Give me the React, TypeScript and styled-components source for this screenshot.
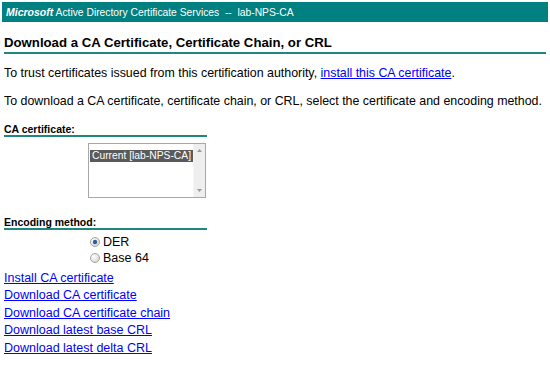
import React from "react";
import styled, { createGlobalStyle } from "styled-components";

const GlobalStyle = createGlobalStyle`
  body {
    margin: 0;
    background: #ffffff;
    font-family: "Liberation Sans", Arial, sans-serif;
    color: #000000;
  }
`;

const Page = styled.div`
  width: 550px;
  height: 371px;
  overflow: hidden;
  padding: 2px 2px 0 2px;
  box-sizing: border-box;
`;

const Banner = styled.div`
  height: 20px;
  background: #008080;
  color: #ffffff;
  font-size: 10.3px;
  line-height: 20px;
  padding-left: 4px;
  white-space: nowrap;
`;

const Brand = styled.span`
  font-weight: bold;
  font-style: italic;
  font-size: 10.5px;
`;

const Content = styled.div`
  padding: 0 2px;
`;

const Title = styled.div`
  margin-top: 13px;
  padding-bottom: 2px;
  border-bottom: 2px solid #1f8680;
  font-size: 13.2px;
  font-weight: bold;
  line-height: 15px;
`;

const Para = styled.p<{ $top: number }>`
  margin: ${(p) => p.$top}px 0 0 0;
  font-size: 12.4px;
  line-height: 14px;
  white-space: nowrap;
`;

const Link = styled.a`
  color: #0000ff;
  text-decoration: underline;
  cursor: pointer;
`;

const SectionLabel = styled.div<{ $top: number }>`
  width: 203px;
  margin-top: ${(p) => p.$top}px;
  border-bottom: 2px solid #1f8680;
  font-size: 10.5px;
  font-weight: bold;
  line-height: 12px;
`;

const FieldRow = styled.div<{ $top: number; $indent: number }>`
  display: flex;
  padding-left: ${(p) => p.$indent}px;
  margin-top: ${(p) => p.$top}px;
`;

const ListBox = styled.div`
  width: 116px;
  height: 53px;
  border: 1px solid #a7a6aa;
  display: flex;
  background: #ffffff;
`;

const ListItems = styled.div`
  flex: 1;
  padding: 1px 0 0 1px;
`;

const Option = styled.div<{ $selected?: boolean }>`
  display: inline-block;
  font-size: 10.3px;
  line-height: 12px;
  padding: 0 2px 0 2px;
  background: ${(p) => (p.$selected ? "#5a5a5a" : "transparent")};
  color: ${(p) => (p.$selected ? "#ffffff" : "#000000")};
  white-space: nowrap;
`;

const ScrollBar = styled.div`
  width: 14px;
  background: #eeeeee;
  border-left: 1px solid #f5f5f5;
  display: flex;
  flex-direction: column;
  justify-content: space-between;
  align-items: center;
  padding: 5px 0;
  box-sizing: border-box;
`;

const Arrow = styled.svg`
  width: 5px;
  height: 3px;
`;

const RadioGroup = styled.div`
  display: flex;
  flex-direction: column;
`;

const RadioRow = styled.label`
  display: flex;
  align-items: center;
  gap: 3px;
  font-size: 12.5px;
  line-height: 16px;
`;

const LinkList = styled.div`
  display: flex;
  flex-direction: column;
  margin-top: 4px;
  font-size: 12.5px;
  line-height: 17.4px;
`;

const RadioDot = ({ checked }: { checked?: boolean }) => (
  <svg width="10" height="10" viewBox="0 0 10 10">
    <defs>
      <radialGradient id={checked ? "rg1" : "rg2"} cx="0.35" cy="0.35" r="0.75">
        <stop offset="0" stopColor="#ffffff" />
        <stop offset="1" stopColor="#d4d4cc" />
      </radialGradient>
    </defs>
    <circle cx="5" cy="5" r="4.5" fill={`url(#${checked ? "rg1" : "rg2"})`} stroke="#a4a4a4" strokeWidth="1" />
    {checked && <circle cx="5" cy="5" r="2.2" fill="#2f5f9e" />}
  </svg>
);

const links = [
  "Install CA certificate",
  "Download CA certificate",
  "Download CA certificate chain",
  "Download latest base CRL",
  "Download latest delta CRL",
];

export default function App() {
  return (
    <>
      <GlobalStyle />
      <Page>
        <Banner>
          <Brand>Microsoft</Brand> Active Directory Certificate Services &nbsp;-- &nbsp;lab-NPS-CA
        </Banner>
        <Content>
          <Title>Download a CA Certificate, Certificate Chain, or CRL</Title>
          <Para $top={12}>
            To trust certificates issued from this certification authority, <Link>install this CA certificate</Link>.
          </Para>
          <Para $top={14}>
            To download a CA certificate, certificate chain, or CRL, select the certificate and encoding method.
          </Para>
          <SectionLabel $top={15}>CA certificate:</SectionLabel>
          <FieldRow $top={6} $indent={84}>
            <ListBox>
              <ListItems>
                <Option $selected>Current [lab-NPS-CA]</Option>
              </ListItems>
              <ScrollBar>
                <Arrow viewBox="0 0 5 3">
                  <path d="M0 3 L2.5 0 L5 3 Z" fill="#9a9a9a" />
                </Arrow>
                <Arrow viewBox="0 0 5 3">
                  <path d="M0 0 L2.5 3 L5 0 Z" fill="#9a9a9a" />
                </Arrow>
              </ScrollBar>
            </ListBox>
          </FieldRow>
          <SectionLabel $top={18}>Encoding method:</SectionLabel>
          <FieldRow $top={4} $indent={86}>
            <RadioGroup>
              <RadioRow>
                <RadioDot checked />
                DER
              </RadioRow>
              <RadioRow>
                <RadioDot />
                Base 64
              </RadioRow>
            </RadioGroup>
          </FieldRow>
          <LinkList>
            {links.map((l, i) => (
              <div key={i}>
                <Link>{l}</Link>
              </div>
            ))}
          </LinkList>
        </Content>
      </Page>
    </>
  );
}
